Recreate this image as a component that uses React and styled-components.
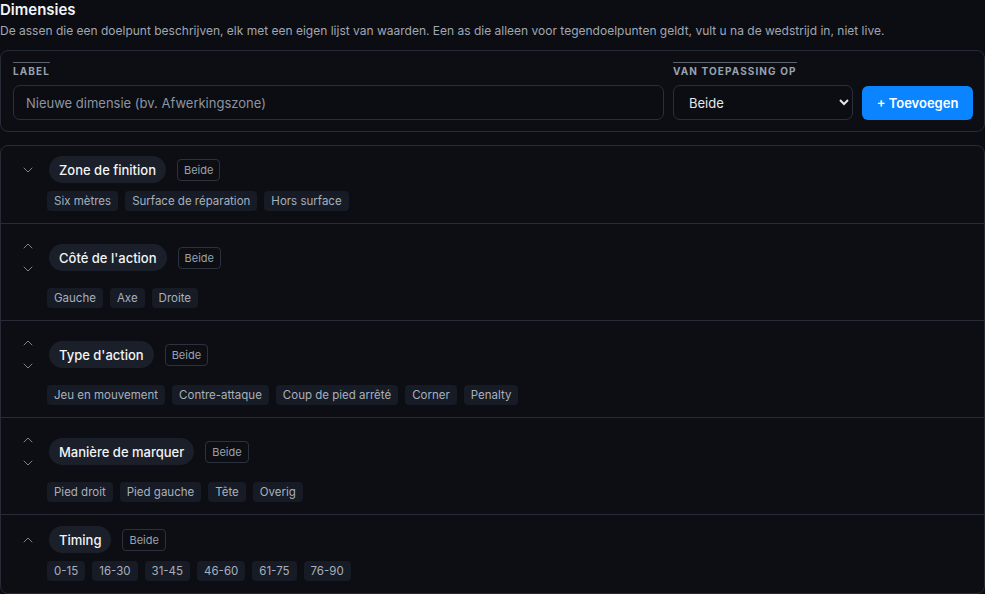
import React from "react";
import styled, { createGlobalStyle } from "styled-components";
import { ChevronDown, ChevronUp } from "lucide-react";

const GlobalStyle = createGlobalStyle`
  html, body {
    margin: 0;
    padding: 0;
    background: #0b0d12;
    color: #e5e7eb;
    font-family: Inter, "Noto Sans", sans-serif;
  }
  * { box-sizing: border-box; }
`;

const Page = styled.div`
  width: 985px;
  height: 594px;
  overflow: hidden;
`;

const Heading = styled.h2`
  margin: 0;
  font-size: 15px;
  line-height: 20px;
  font-weight: 600;
  color: #f3f4f6;
`;

const Intro = styled.p`
  margin: 2px 0 0;
  font-size: 12px;
  line-height: 18px;
  color: #a1a7b3;
`;

const FormCard = styled.div`
  margin-top: 10px;
  border: 1px solid #262b36;
  border-radius: 8px;
  background: #0c0e13;
  padding: 11px 11px 11px 12px;
  display: grid;
  grid-template-columns: 1fr 180px 111px;
  column-gap: 9px;
  align-items: end;
`;

const Field = styled.label`
  display: flex;
  flex-direction: column;
  gap: 8px;
`;

const FieldLabel = styled.span`
  align-self: flex-start;
  border-top: 1px solid #5c6370;
  padding-top: 2px;
  font-size: 10px;
  line-height: 12px;
  font-weight: 700;
  letter-spacing: 1.1px;
  text-transform: uppercase;
  color: #9aa1ad;
`;

const TextInput = styled.input`
  height: 35px;
  border: 1px solid #2a303b;
  border-radius: 7px;
  background: #0b0d12;
  color: #e5e7eb;
  font-family: inherit;
  font-size: 13px;
  padding: 0 12px;
  outline: none;
  &::placeholder { color: #8d94a1; }
`;

const Select = styled.select`
  height: 35px;
  border: 1px solid #2a303b;
  border-radius: 7px;
  background: #0b0d12;
  color: #e5e7eb;
  color-scheme: dark;
  font-family: inherit;
  font-size: 13px;
  padding: 0 8px 0 11px;
  outline: none;
`;

const AddButton = styled.button`
  height: 34px;
  border: none;
  border-radius: 6px;
  background: #0a84ff;
  color: #fff;
  font-family: inherit;
  font-size: 13px;
  font-weight: 600;
  cursor: pointer;
`;

const ListCard = styled.div`
  margin-top: 13px;
  border: 1px solid #262b36;
  border-radius: 8px;
  background: #0c0e13;
`;

const Row = styled.div`
  padding: 11px 12px 12px 16px;
  &:first-child { padding-top: 10px; }
  & + & { border-top: 1px solid #262b36; }
`;

const RowHead = styled.div`
  display: flex;
  align-items: center;
  min-height: 27px;
`;

const Arrows = styled.div`
  width: 22px;
  display: flex;
  flex-direction: column;
  align-items: center;
  margin-right: 10px;
`;

const ArrowButton = styled.button`
  width: 22px;
  height: 22.5px;
  padding: 0;
  border: none;
  background: none;
  color: #7b8290;
  display: flex;
  align-items: center;
  justify-content: center;
  cursor: pointer;
`;

const TitlePill = styled.span`
  height: 27px;
  display: inline-flex;
  align-items: center;
  padding: 0 10px;
  border-radius: 14px;
  background: #1a1f29;
  font-size: 13px;
  font-weight: 500;
  color: #f3f4f6;
`;

const ScopeBadge = styled.span`
  margin-left: 11px;
  height: 22px;
  display: inline-flex;
  align-items: center;
  padding: 0 6px;
  border: 1px solid #2c323d;
  border-radius: 4px;
  font-size: 11px;
  color: #9aa1ad;
`;

const Values = styled.div`
  display: flex;
  flex-wrap: wrap;
  gap: 7px;
  margin-top: 8px;
  padding-left: 30px;
`;

const Chip = styled.span`
  height: 20px;
  display: inline-flex;
  align-items: center;
  padding: 0 7px;
  border-radius: 4px;
  background: #161b25;
  font-size: 11.5px;
  color: #a9b0bc;
`;

const dimensions = [
  { label: "Zone de finition", values: ["Six mètres", "Surface de réparation", "Hors surface"] },
  { label: "Côté de l'action", values: ["Gauche", "Axe", "Droite"] },
  {
    label: "Type d'action",
    values: ["Jeu en mouvement", "Contre-attaque", "Coup de pied arrêté", "Corner", "Penalty"]
  },
  { label: "Manière de marquer", values: ["Pied droit", "Pied gauche", "Tête", "Overig"] },
  { label: "Timing", values: ["0-15", "16-30", "31-45", "46-60", "61-75", "76-90"] }
];

const DimensionRow = ({ dim, first, last }) => (
  <Row>
    <RowHead>
      <Arrows>
        {!first && (
          <ArrowButton aria-label="Omhoog">
            <ChevronUp size={16} strokeWidth={1.5} />
          </ArrowButton>
        )}
        {!last && (
          <ArrowButton aria-label="Omlaag">
            <ChevronDown size={16} strokeWidth={1.5} />
          </ArrowButton>
        )}
      </Arrows>
      <TitlePill>{dim.label}</TitlePill>
      <ScopeBadge>Beide</ScopeBadge>
    </RowHead>
    <Values>
      {dim.values.map(v => (
        <Chip key={v}>{v}</Chip>
      ))}
    </Values>
  </Row>
);

export default function App() {
  return (
    <Page>
      <GlobalStyle />
      <Heading>Dimensies</Heading>
      <Intro>
        De assen die een doelpunt beschrijven, elk met een eigen lijst van waarden. Een as die
        alleen voor tegendoelpunten geldt, vult u na de wedstrijd in, niet live.
      </Intro>
      <FormCard>
        <Field>
          <FieldLabel>Label</FieldLabel>
          <TextInput placeholder="Nieuwe dimensie (bv. Afwerkingszone)" />
        </Field>
        <Field>
          <FieldLabel>Van toepassing op</FieldLabel>
          <Select defaultValue="both">
            <option value="both">Beide</option>
            <option value="for">Doelpunten</option>
            <option value="against">Tegendoelpunten</option>
          </Select>
        </Field>
        <AddButton>+ Toevoegen</AddButton>
      </FormCard>
      <ListCard>
        {dimensions.map((d, i) => (
          <DimensionRow
            key={d.label}
            dim={d}
            first={i === 0}
            last={i === dimensions.length - 1}
          />
        ))}
      </ListCard>
    </Page>
  );
}
